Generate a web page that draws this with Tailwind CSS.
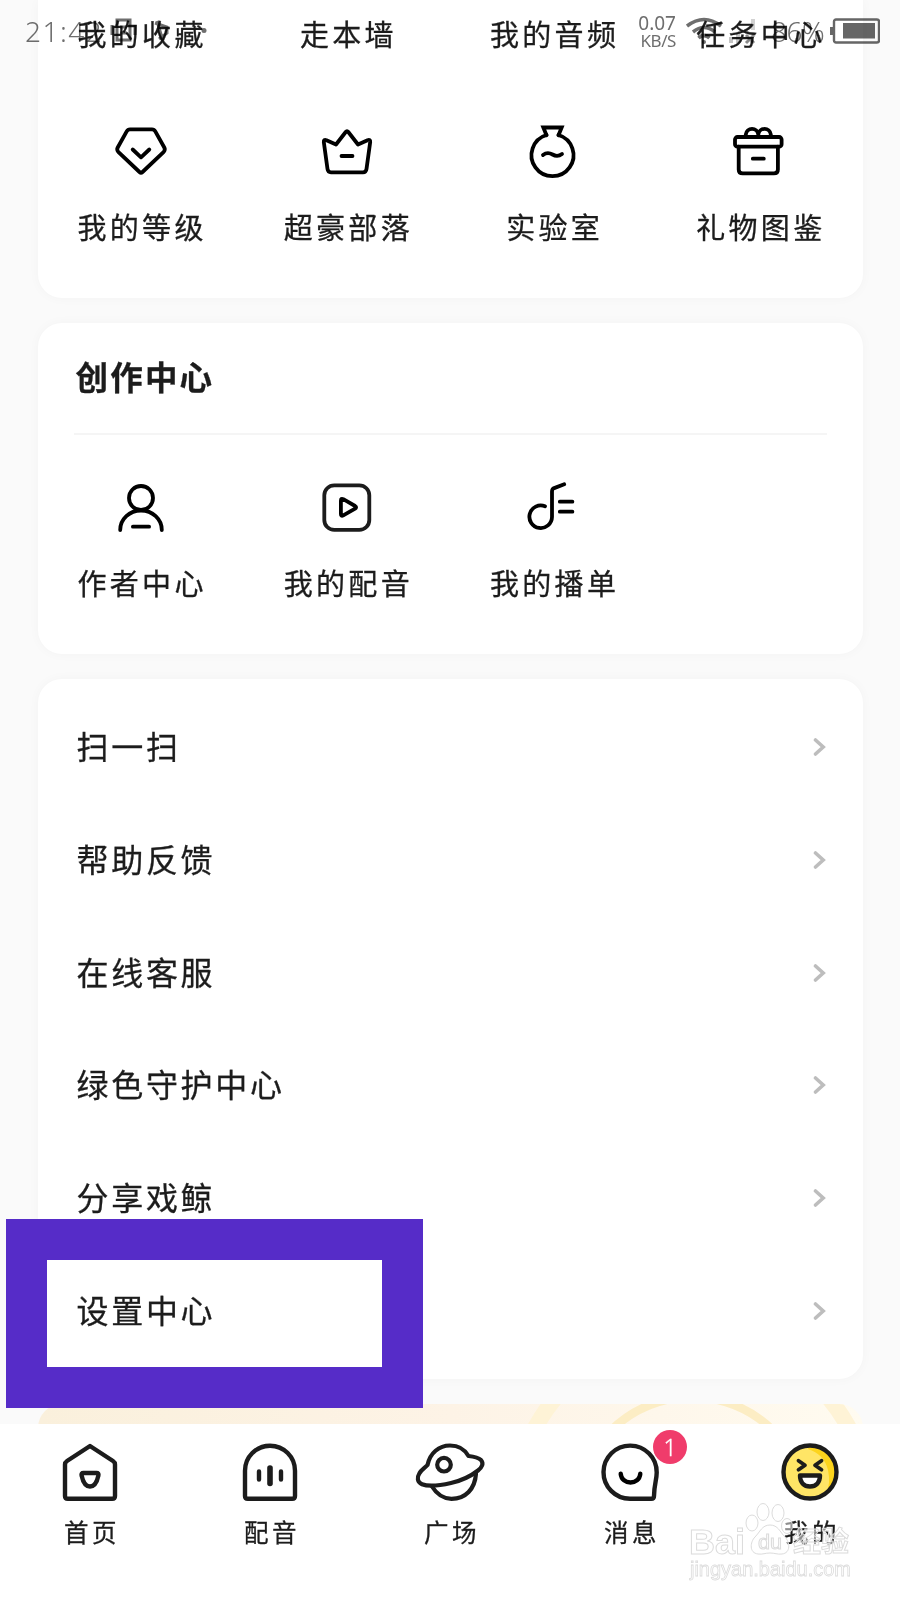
<!DOCTYPE html>
<html lang="zh-CN">
<head>
    <meta charset="UTF-8" />
    <meta name="viewport" content="width=device-width, initial-scale=1.0" />
    <title>我的</title>

    <!-- Tailwind CDN -->
    <script src="https://cdn.jsdelivr.net/npm/@tailwindcss/browser@4"></script>

    <style>
        body {
            font-family: 'Noto Sans CJK SC', sans-serif;
        }
        main, nav {
            -webkit-text-stroke: 0.3px;
        }
    </style>
</head>

<body class="relative h-[1600px] w-[900px] overflow-hidden bg-[#fafafa] text-[#1c1c1c]">

<!-- Barra de estado -->
<div class="absolute inset-x-0 top-0 z-30 flex h-[62px] items-center pl-[25px] pr-5 font-['Noto_Sans'] font-light text-[#6e6e6e] mix-blend-multiply">
    <span class="w-[82px] text-[28px] tracking-[1.5px]">21:42</span>
    <svg class="h-8 w-[102px]" viewBox="0 0 102 32" fill="none" stroke="currentColor" stroke-width="3">
        <path d="M10 5h13v20H10zM5 10v10M28 10v10M13 12h7M13 18h7" />
        <path d="M50 6l6 20M48 8l12 4v6l-8 6" />
        <circle cx="97" cy="15.500" r="2.500" fill="currentColor" stroke="none" />
    </svg>
    <div class="ml-auto flex w-[52px] flex-col items-end font-normal">
        <span class="text-[19px] leading-[19px]">0.07</span>
        <span class="text-[17px] leading-[16px] tracking-tight">KB/S</span>
    </div>
    <svg class="ml-2.5 h-8 w-9" viewBox="0 0 36 32" fill="none" stroke="currentColor" stroke-width="3.6">
        <path d="M1 11q17-13 34 0M7 17q11-9 22 0M12.500 23q5.500-5 11 0" />
        <circle cx="18" cy="27" r="2" fill="currentColor" stroke="none" />
    </svg>
    <svg class="ml-[5px] h-8 w-8" viewBox="0 0 32 32">
        <path d="M2 22h4v6H2zM9 18h4v10H9z" fill="#c4c4c4" />
        <path d="M24 4h4v11h-4z" fill="#d2d2d2" />
        <path d="M19 20l8 8M27 20l-8 8" stroke="#8a8a8a" stroke-width="3" />
    </svg>
    <span class="ml-3 w-[56px] text-[28px] tracking-[-0.5px]">86%</span>
    <svg class="ml-[3px] h-8 w-[50px] shrink-0" viewBox="0 0 50 32">
        <rect x="4" y="4.500" width="45" height="23" rx="2" fill="none" stroke="#666" stroke-width="2.400" />
        <path d="M0 12h3v8H0zM13 8h32v15.500H13z" fill="#666" />
    </svg>
</div>

<!-- Contenido -->
<main class="flex flex-col gap-[25px] px-[37.5px]">

    <section class="flex h-[298px] flex-col rounded-b-3xl bg-white shadow-[0_0_12px_rgba(0,0,0,0.03)]">
        <div class="grid grid-cols-4 pt-3 text-center text-[29px] leading-[42px] tracking-[3.3px]">
            <span class="pl-[3px]">我的收藏</span>
            <span class="pl-[3px]">走本墙</span>
            <span class="pl-[3px]">我的音频</span>
            <span class="pl-[3px]">任务中心</span>
        </div>
        <div class="mt-[67px] grid grid-cols-4 text-center text-[29px] leading-[42px] tracking-[3.3px]">
            <div class="flex flex-col items-center gap-6">
                <svg class="size-15" viewBox="0 0 60 60" fill="none" stroke="#000" stroke-width="3.8" stroke-linecap="round" stroke-linejoin="round">
                    <path d="M19 8.300h22q2.200 0 3.300 2L53.300 26.500q1.300 2.500-.8 4.600L31.500 51q-1.500 1.400-3 0L7.500 31.100q-2.100-2.100-.8-4.600L15.700 10.300q1.100-2 3.300-2z" />
                    <path d="M21.700 28.500l8.300 7.800 8.300-7.800" />
                </svg>
                <span class="pl-[3px]">我的等级</span>
            </div>
            <div class="flex flex-col items-center gap-6">
                <svg class="size-15" viewBox="0 0 60 60" fill="none" stroke="#000" stroke-width="3.8" stroke-linecap="round" stroke-linejoin="round">
                    <path d="M19 23.500L28.700 11q1.300-1.700 2.600 0L41 23.500l9.500-4.300q3-1 2.700 1.800L49.500 48q-.5 3.300-3.500 3.300H14q-3 0-3.500-3.300L6.800 21q-.3-2.800 2.700-1.800z" />
                    <path d="M24.500 35h11" />
                </svg>
                <span class="pl-[3px]">超豪部落</span>
            </div>
            <div class="flex flex-col items-center gap-6">
                <svg class="size-15" viewBox="0.500 0.500 60 60" fill="none" stroke="#000" stroke-width="3.8" stroke-linecap="round" stroke-linejoin="miter">
                    <path d="M24 14.800L20.800 7h18.400L36 14.800" />
                    <path d="M24 14.500A21 21 0 1 0 36 14.500" />
                    <path d="M20.500 34.500q4.500-3.500 9.500-.5t9.500-.5" />
                </svg>
                <span class="pl-[3px]">实验室</span>
            </div>
            <div class="flex flex-col items-center gap-6">
                <svg class="size-15" viewBox="0.700 0.300 60 60" fill="none" stroke="#000" stroke-width="3.8" stroke-linecap="round" stroke-linejoin="round">
                    <path d="M17.500 16v-2.300a6.300 6.300 0 0 1 12.500 0V16M30 16v-2.300a6.300 6.300 0 0 1 12.500 0V16" />
                    <rect x="6.700" y="16.300" width="46.600" height="9.700" rx="2.500" />
                    <path d="M10.400 26v22.700q0 4 4 4h31.200q4 0 4-4V26M24.500 38h11" />
                </svg>
                <span class="pl-[3px]">礼物图鉴</span>
            </div>
        </div>
    </section>

    <section class="flex h-[331px] flex-col rounded-3xl bg-white shadow-[0_0_12px_rgba(0,0,0,0.03)]">
        <h2 class="ml-[38px] mt-[30px] text-[32.5px] font-bold leading-[46px] tracking-[2.2px]">创作中心</h2>
        <div class="mx-9 mt-[34px] h-0.5 bg-[#f5f5f5]"></div>
        <div class="mt-[42px] grid grid-cols-4 text-center text-[29px] leading-[42px] tracking-[3.3px]">
            <div class="flex flex-col items-center gap-6">
                <svg class="size-15" viewBox="0 0 60 60" fill="none" stroke="#000" stroke-width="3.8" stroke-linecap="round" stroke-linejoin="round">
                    <circle cx="30" cy="21" r="12" />
                    <path d="M9.200 53a20.800 19.500 0 0 1 41.600 0M21.900 49.700h16.200" />
                </svg>
                <span class="pl-[3px]">作者中心</span>
            </div>
            <div class="flex flex-col items-center gap-6">
                <svg class="size-15" viewBox="0.300 0 60 60" fill="none" stroke="#000" stroke-width="3.8" stroke-linecap="round" stroke-linejoin="round">
                    <rect x="7.600" y="8.300" width="45" height="44.600" rx="10" stroke="#1c1c1c" />
                    <path d="M24.200 23.700q0-2.800 2.400-1.500l11.800 6.800q2 1.300 0 2.600l-11.800 6.800q-2.400 1.300-2.400-1.500z" />
                </svg>
                <span class="pl-[3px]">我的配音</span>
            </div>
            <div class="flex flex-col items-center gap-6">
                <svg class="size-15" viewBox="-0.200 0 60 60" fill="none" stroke="#000" stroke-width="3.8" stroke-linecap="round" stroke-linejoin="round">
                    <path d="M21.800 29.300A11.300 11.300 0 1 0 28.800 40V14.500q0-2.500 2.200-3.400L41 7.300M36.600 24.700h12.600M36.600 34.700h12.600" />
                </svg>
                <span class="pl-[3px]">我的播单</span>
            </div>
        </div>
    </section>

    <section class="h-[700px] rounded-3xl bg-white py-3 shadow-[0_0_12px_rgba(0,0,0,0.03)]">
        <ul class="flex h-full flex-col pl-[39px] pr-9 text-[32px] tracking-[2.7px]">
            <li class="flex flex-1 items-center justify-between"><span class="-mt-1">扫一扫</span>
                <svg class="h-5 w-3.5" viewBox="0 0 14 20" fill="none" stroke="#bdbdbd" stroke-width="3.6" stroke-linecap="round"><path d="M2.500 3l7.700 7-7.700 7" /></svg>
            </li>
            <li class="flex flex-1 items-center justify-between"><span class="-mt-1">帮助反馈</span>
                <svg class="h-5 w-3.5" viewBox="0 0 14 20" fill="none" stroke="#bdbdbd" stroke-width="3.6" stroke-linecap="round"><path d="M2.500 3l7.700 7-7.700 7" /></svg>
            </li>
            <li class="flex flex-1 items-center justify-between"><span class="-mt-1">在线客服</span>
                <svg class="h-5 w-3.5" viewBox="0 0 14 20" fill="none" stroke="#bdbdbd" stroke-width="3.6" stroke-linecap="round"><path d="M2.500 3l7.700 7-7.700 7" /></svg>
            </li>
            <li class="flex flex-1 items-center justify-between"><span class="-mt-1">绿色守护中心</span>
                <svg class="h-5 w-3.5" viewBox="0 0 14 20" fill="none" stroke="#bdbdbd" stroke-width="3.6" stroke-linecap="round"><path d="M2.500 3l7.700 7-7.700 7" /></svg>
            </li>
            <li class="flex flex-1 items-center justify-between"><span class="-mt-1">分享戏鲸</span>
                <svg class="h-5 w-3.5" viewBox="0 0 14 20" fill="none" stroke="#bdbdbd" stroke-width="3.6" stroke-linecap="round"><path d="M2.500 3l7.700 7-7.700 7" /></svg>
            </li>
            <li class="flex flex-1 items-center justify-between"><span class="-mt-1">设置中心</span>
                <svg class="h-5 w-3.5" viewBox="0 0 14 20" fill="none" stroke="#bdbdbd" stroke-width="3.6" stroke-linecap="round"><path d="M2.500 3l7.700 7-7.700 7" /></svg>
            </li>
        </ul>
    </section>

    <!-- Banner, queda casi tapado por la barra inferior -->
    <div class="h-[120px] overflow-hidden rounded-3xl bg-linear-to-r from-[#faf0dc] via-[#fdf3e6] to-[#fffbf0]">
        <svg class="h-[120px] w-[825px]" viewBox="0 0 825 120" fill="none">
            <circle cx="654" cy="108" r="178" stroke="#fef3d6" stroke-width="16" />
            <circle cx="654" cy="108" r="115" stroke="#fcedc4" stroke-width="8.500" />
        </svg>
    </div>
</main>

<!-- Recuadro sobre "设置中心" -->
<div class="absolute left-[6px] top-[1218.5px] z-10 h-[189px] w-[417px] border-[41.5px] border-[#562cc8]"></div>

<!-- Barra inferior -->
<nav class="absolute inset-x-0 bottom-0 z-20 grid h-[176px] grid-cols-5 bg-white pt-4 text-[24.5px] leading-[36px] tracking-[3.5px]">
    <div class="flex flex-col items-center gap-2.5">
        <svg class="size-16" viewBox="0 0 64 64" fill="none" stroke="#1c1c1c" stroke-width="4.4" stroke-linecap="round" stroke-linejoin="round">
            <path d="M32 6l23 15q2 1.300 2 3.500V56q0 2.800-2.800 2.800H9.800Q7 58.800 7 56V24.500Q7 22.300 9 21z" />
            <path d="M25.500 33h13q2.500 0 1.900 2.500C39 42 36 46.500 32 46.500s-7-4.500-8.400-11q-.6-2.500 1.900-2.500z" />
        </svg>
        <span class="pl-1">首页</span>
    </div>
    <div class="flex flex-col items-center gap-2.5">
        <svg class="size-16" viewBox="0 0 64 64" fill="none" stroke="#1c1c1c" stroke-width="4.4" stroke-linecap="round" stroke-linejoin="round">
            <path d="M7 30.700a25 25 0 0 1 50 0V56q0 2.800-2.800 2.800H9.800Q7 58.800 7 56z" />
            <path d="M21 31.500v8M43 31.500v8" />
            <path d="M32 28v15.500" stroke-width="5.600" />
        </svg>
        <span class="pl-1">配音</span>
    </div>
    <div class="flex flex-col items-center gap-2.5">
        <svg class="size-16 overflow-visible" viewBox="0 0 64 64" fill="none" stroke="#1c1c1c" stroke-width="4.200" stroke-linecap="round" stroke-linejoin="round">
            <path d="M9.500 25C12 13 21 5.500 32 5.500c8 0 14.500 3.500 18.500 10.500 5 .5 9.500 1.200 12.500 4 3 3.500 1 7.500-3 10.500C51 37.500 42 41 33 43c-10 2.300-22 4-29 1.200-5-2-5-7-2.700-10.700C3 30 7.500 27.500 9.500 25z" />
            <path d="M14 46.500c5 8 11.500 12.300 19.500 12.300C47.500 58.800 57 49 58 33.500" />
            <circle cx="26" cy="24.700" r="6.800" />
        </svg>
        <span class="pl-1">广场</span>
    </div>
    <div class="flex flex-col items-center gap-2.5">
        <div class="relative">
            <svg class="size-16" viewBox="0 0 64 64" fill="none" stroke="#1c1c1c" stroke-width="4.4" stroke-linecap="round" stroke-linejoin="round">
                <path d="M32 58.800A26.600 26.600 0 1 1 58.700 32.500C58.700 40 56.200 44 56 56q0 2.800-2.800 2.800z" />
                <path d="M22.700 33.800c1 11.500 18.600 11.500 19.600 0" stroke="#000" />
            </svg>
            <span class="absolute -top-[10px] left-[55px] flex size-[34px] items-center justify-center rounded-full bg-[#f03c6b] font-['Noto_Sans'] text-[23px] font-light tracking-normal text-white">1</span>
        </div>
        <span class="pl-1">消息</span>
    </div>
    <div class="flex flex-col items-center gap-2.5">
        <svg class="size-16" viewBox="0 0 64 64" fill="none" stroke="#1c1c1c" stroke-width="4.4" stroke-linecap="round" stroke-linejoin="round">
            <circle cx="32" cy="32" r="26.500" fill="#ffe566" stroke="none" />
            <path d="M32 5.500a26.500 26.500 0 0 1 16 48Q53 44 50 30 46 14 30 9z" fill="#fdd41c" stroke="none" />
            <circle cx="32" cy="32" r="26.500" />
            <path d="M20.500 20.700l6.500 4.500-6.500 4.500M43.500 20.700l-6.500 4.500 6.500 4.500" stroke-width="3.800" />
            <path d="M22 35.500h20c0 7-4 11-10 11s-10-4-10-11z" fill="#fff" />
        </svg>
        <span class="pl-1">我的</span>
    </div>
</nav>

<!-- Marca de agua -->
<svg class="absolute left-[680px] top-[1495px] z-30 h-[90px] w-[190px]" viewBox="0 0 190 90" fill="#ffffff" fill-opacity="0.5" stroke="#dcdcdc" stroke-width="1">
    <text x="9" y="59" font-family="Liberation Sans" font-weight="bold" font-size="35" textLength="56" lengthAdjust="spacingAndGlyphs">Bai</text>
    <ellipse cx="72" cy="28" rx="6" ry="8" />
    <ellipse cx="83" cy="17" rx="6" ry="8.500" />
    <ellipse cx="98" cy="18" rx="6" ry="8.500" />
    <ellipse cx="107" cy="31" rx="5.500" ry="7.500" />
    <path d="M90 30c8 0 10 7 15 12s6 16-3 17c-5 .6-7-1-12-1s-7 1.600-12 1c-9-1-8-12-3-17s7-12 15-12z" />
    <text x="78" y="54" font-family="Liberation Sans" font-size="20" textLength="24" lengthAdjust="spacingAndGlyphs">du</text>
    <text x="113" y="57" font-family="Noto Sans CJK SC" font-weight="bold" font-size="28" textLength="56">经验</text>
    <text x="10" y="81" font-family="Liberation Sans" font-size="20" textLength="161" lengthAdjust="spacingAndGlyphs" stroke-width="0.800">jingyan.baidu.com</text>
</svg>

</body>
</html>
